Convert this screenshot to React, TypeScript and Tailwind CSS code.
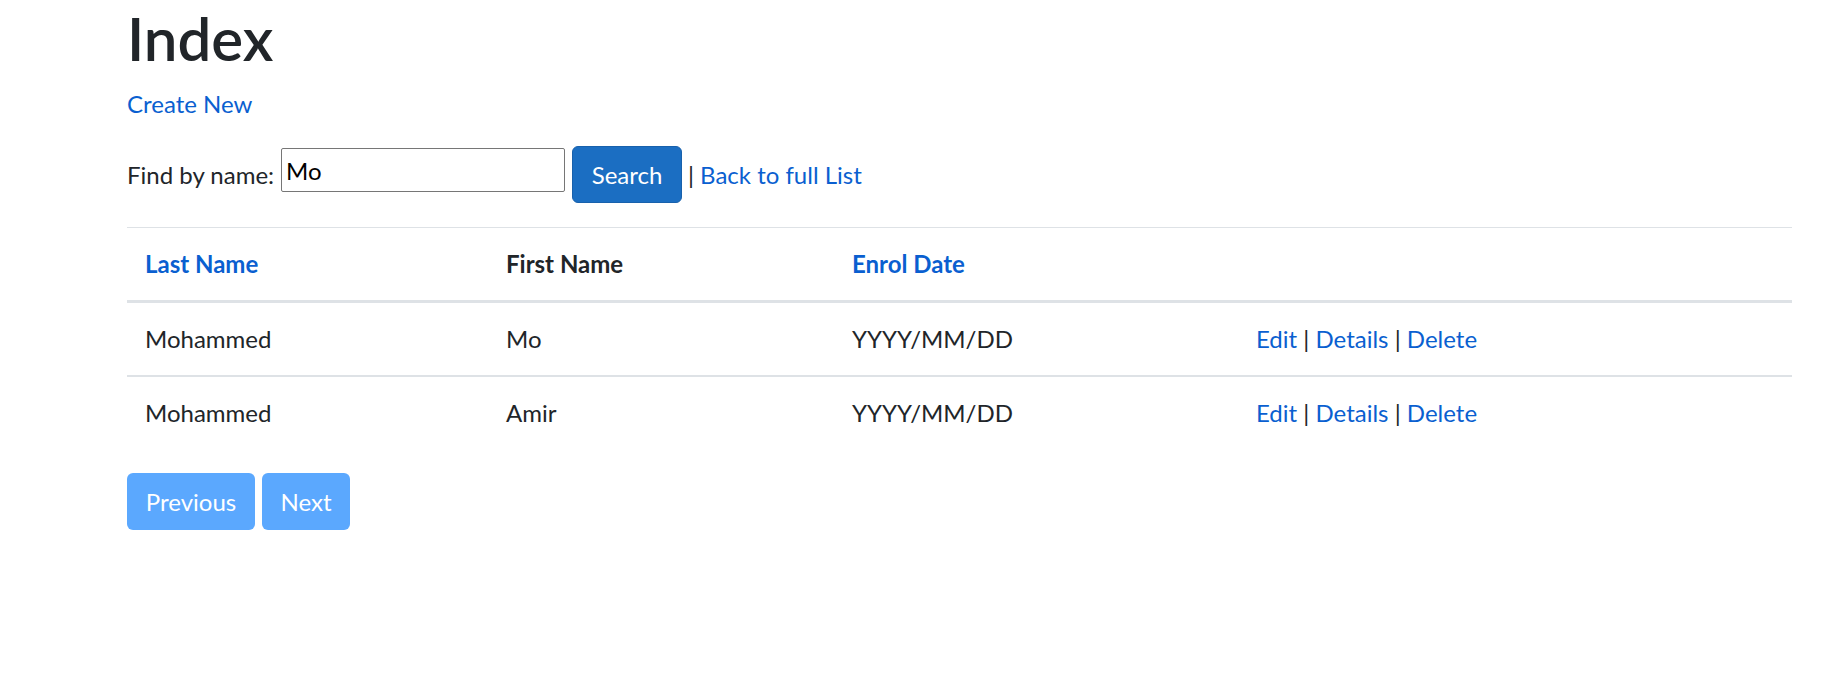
const students = [
    { last: 'Mohammed', first: 'Mo', date: 'YYYY/MM/DD' },
    { last: 'Mohammed', first: 'Amir', date: 'YYYY/MM/DD' },
];

export default function App() {
    return (
        <div className="min-h-screen bg-white font-['Lato','Liberation_Sans',sans-serif] text-[24px] leading-[1.5] text-[#212529]">
            <div className="ml-[127px] w-[1665px] pt-[2px]">
                <h1 className="mb-[12px] text-[60px] font-semibold leading-[1.2]">Index</h1>

                <p className="mb-[24px]">
                    <a href="#" className="text-[#0a5fd0]">
                        Create New
                    </a>
                </p>

                {/* search form */}
                <form className="mb-[24px] flex items-center" onSubmit={(e) => e.preventDefault()}>
                    <span>Find by name:</span>
                    <input
                        type="text"
                        defaultValue="Mo"
                        className="ml-[7px] mt-[2px] h-[44px] w-[284px] self-start rounded-[2px] border border-[#767676] px-[4px] text-[24px] text-black outline-none"
                    />
                    <button
                        type="submit"
                        className="ml-[7px] h-[57px] w-[110px] rounded-[6px] border border-[#1861ac] bg-[#1b6ec2] text-white"
                    >
                        Search
                    </button>
                    <span className="ml-[6px]">|</span>
                    <a href="#" className="ml-[6px] text-[#0a5fd0]">
                        Back to full List
                    </a>
                </form>

                <table className="w-full border-collapse text-left">
                    <thead>
                        <tr className="border-t border-b-[3px] border-t-[#dee2e6] border-b-[#dee2e6]">
                            <th className="w-[361px] px-[18px] py-[18px] font-bold">
                                <a href="#" className="text-[#0a5fd0]">
                                    Last Name
                                </a>
                            </th>
                            <th className="w-[346px] px-[18px] py-[18px] font-bold">First Name</th>
                            <th className="w-[404px] px-[18px] py-[18px] font-bold">
                                <a href="#" className="text-[#0a5fd0]">
                                    Enrol Date
                                </a>
                            </th>
                            <th className="px-[18px] py-[18px]"></th>
                        </tr>
                    </thead>
                    <tbody>
                        {students.map((s, i) => (
                            <tr key={i} className={i < students.length - 1 ? 'border-b-2 border-[#dee2e6]' : ''}>
                                <td className="px-[18px] py-[18px]">{s.last}</td>
                                <td className="px-[18px] py-[18px]">{s.first}</td>
                                <td className="px-[18px] py-[18px]">{s.date}</td>
                                <td className="px-[18px] py-[18px]">
                                    <a href="#" className="text-[#0a5fd0]">Edit</a> |{' '}
                                    <a href="#" className="text-[#0a5fd0]">Details</a> |{' '}
                                    <a href="#" className="text-[#0a5fd0]">Delete</a>
                                </td>
                            </tr>
                        ))}
                    </tbody>
                </table>

                {/* paging */}
                <div className="mt-[24px] flex gap-[7px]">
                    <a href="#" className="flex h-[57px] w-[128px] items-center justify-center rounded-[6px] bg-[#5ba8fe] text-white">
                        Previous
                    </a>
                    <a href="#" className="flex h-[57px] w-[88px] items-center justify-center rounded-[6px] bg-[#5ba8fe] text-white">
                        Next
                    </a>
                </div>
            </div>
        </div>
    );
}
